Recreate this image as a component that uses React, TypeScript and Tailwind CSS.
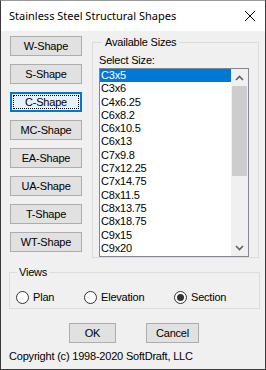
import React from 'react';

const shapes = ['W-Shape', 'S-Shape', 'C-Shape', 'MC-Shape', 'EA-Shape', 'UA-Shape', 'T-Shape', 'WT-Shape'];

const sizes = [
  'C3x5', 'C3x6', 'C4x6.25', 'C6x8.2', 'C6x10.5', 'C6x13', 'C7x9.8',
  'C7x12.25', 'C7x14.75', 'C8x11.5', 'C8x13.75', 'C8x18.75', 'C9x15', 'C9x20',
];

const ShapeButton = ({ label, focused }: { label: string; focused?: boolean }) =>
  focused ? (
    <button className="w-[72px] h-[20px] bg-[#e5f1fb] border-2 border-[#0078d7] flex items-center justify-center p-[1px]">
      <span className="w-full h-full border border-dotted border-black flex items-center justify-center leading-[11px]">
        {label}
      </span>
    </button>
  ) : (
    <button className="w-[72px] h-[20px] bg-[#e1e1e1] border border-[#adadad] flex items-center justify-center leading-[11px]">
      {label}
    </button>
  );

const Radio = ({ label, checked }: { label: string; checked?: boolean }) => (
  <div className="flex items-center gap-[4px]">
    <div className="w-[13px] h-[13px] rounded-full border border-[#333333] bg-white flex items-center justify-center">
      {checked && <div className="w-[7px] h-[7px] rounded-full bg-[#333333]" />}
    </div>
    <span className="leading-[13px]">{label}</span>
  </div>
);

const Chevron = ({ up }: { up?: boolean }) => (
  <svg width="9" height="6" viewBox="0 0 9 6">
    <polyline
      points={up ? '1,5 4.5,1.5 8,5' : '1,1 4.5,4.5 8,1'}
      fill="none"
      stroke="#606060"
      strokeWidth="1.6"
    />
  </svg>
);

export default function App() {
  return (
    <div
      className="w-[266px] h-[370px] border border-[#3a3a3a] border-t-[#9a9a9a] bg-[#f0f0f0] flex flex-col text-[11px] tracking-[-0.2px] text-black overflow-hidden"
      style={{ fontFamily: '"Liberation Sans", Arial, sans-serif' }}
    >
      {/* title bar */}
      <div className="h-[30px] bg-white flex items-center justify-between pl-[8px] pr-[9px] shrink-0">
        <span className="text-[11px] tracking-normal" style={{ fontFamily: '"Noto Sans", "Liberation Sans", sans-serif' }}>
          Stainless Steel Structural Shapes
        </span>
        <svg width="12" height="12" viewBox="0 0 12 12">
          <path d="M1 1 L11 11 M11 1 L1 11" stroke="#000" strokeWidth="1" />
        </svg>
      </div>

      <div className="flex items-start pt-[5px] pl-[9px]">
        <div className="flex flex-col gap-[8px]">
          {shapes.map((s) => (
            <ShapeButton key={s} label={s} focused={s === 'C-Shape'} />
          ))}
        </div>

        <fieldset className="ml-[10px] w-[167px] h-[222px] border border-[#dcdcdc] pl-[6px]">
          <legend className="ml-[3px] px-[3px] leading-[13px]">Available Sizes</legend>
          <div className="mt-[5px] leading-[13px]">Select Size:</div>
          <div className="mt-[1px] w-[150px] h-[189px] border border-[#828790] bg-white flex">
            <div className="flex-1 flex flex-col">
              {sizes.map((s, i) => (
                <div
                  key={s}
                  className={`h-[13.3px] leading-[13px] pl-[1px] shrink-0 ${i === 0 ? 'bg-[#0078d7] text-white' : ''}`}
                >
                  {s}
                </div>
              ))}
            </div>
            <div className="w-[17px] bg-[#f0f0f0] flex flex-col items-center">
              <div className="h-[17px] flex items-center justify-center">
                <Chevron up />
              </div>
              <div className="w-[15px] h-[90px] bg-[#cdcdcd]" />
              <div className="flex-1" />
              <div className="h-[17px] flex items-center justify-center">
                <Chevron />
              </div>
            </div>
          </div>
        </fieldset>
      </div>

      <fieldset className="ml-[8px] mt-[8px] w-[251px] h-[43px] border border-[#dcdcdc] pl-[6px]">
        <legend className="ml-[1px] px-[2px] leading-[13px]">Views</legend>
        <div className="flex items-center mt-[12px]">
          <div className="w-[68px]">
            <Radio label="Plan" />
          </div>
          <div className="w-[90px]">
            <Radio label="Elevation" />
          </div>
          <Radio label="Section" checked />
        </div>
      </fieldset>

      <div className="flex mt-[14px] pl-[68px] gap-[30px]">
        <button className="w-[47px] h-[20px] bg-[#e1e1e1] border border-[#adadad] leading-[11px]">OK</button>
        <button className="w-[53px] h-[20px] bg-[#e1e1e1] border border-[#adadad] leading-[11px]">Cancel</button>
      </div>

      <div className="mt-[7px] pl-[8px] leading-[13px]">Copyright (c) 1998-2020 SoftDraft, LLC</div>
    </div>
  );
}
